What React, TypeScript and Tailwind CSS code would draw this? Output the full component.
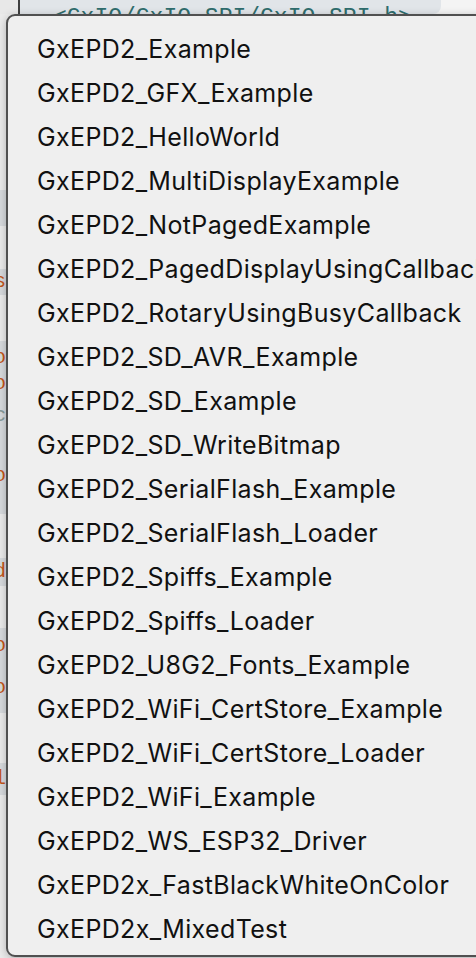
import React from 'react'

const items = [
  'GxEPD2_Example',
  'GxEPD2_GFX_Example',
  'GxEPD2_HelloWorld',
  'GxEPD2_MultiDisplayExample',
  'GxEPD2_NotPagedExample',
  'GxEPD2_PagedDisplayUsingCallback',
  'GxEPD2_RotaryUsingBusyCallback',
  'GxEPD2_SD_AVR_Example',
  'GxEPD2_SD_Example',
  'GxEPD2_SD_WriteBitmap',
  'GxEPD2_SerialFlash_Example',
  'GxEPD2_SerialFlash_Loader',
  'GxEPD2_Spiffs_Example',
  'GxEPD2_Spiffs_Loader',
  'GxEPD2_U8G2_Fonts_Example',
  'GxEPD2_WiFi_CertStore_Example',
  'GxEPD2_WiFi_CertStore_Loader',
  'GxEPD2_WiFi_Example',
  'GxEPD2_WS_ESP32_Driver',
  'GxEPD2x_FastBlackWhiteOnColor',
  'GxEPD2x_MixedTest',
]

// strips of the editor peeking out at the left edge: [height, band?, glyph]
const editorRows: [number, boolean, string][] = [
  [176, false, ''],
  [36, true, ''],
  [43, false, ''],
  [26, true, 's'],
  [46, false, ''],
  [33, true, 'o'],
  [20, true, 'o'],
  [44, true, 'c'],
  [76, true, 'o'],
  [44, false, ''],
  [28, true, 'd'],
  [42, false, ''],
  [35, true, 'o'],
  [50, true, 'o'],
  [50, false, ''],
  [32, true, 'l'],
  [123, false, ''],
  [54, false, ''],
]

export default function App() {
  return (
    <div className="relative w-[476px] h-[958px] overflow-hidden bg-[#ececec]">
      {/* editor behind the menu */}
      <div className="flex flex-col">
        <div className="flex h-[14px] shrink-0 bg-[#f4f4f4]">
          <div className="w-[18px] bg-[#e8e8e8]" />
          <div className="w-[2px] bg-[#3f3f3f]" />
          <div className="w-[421px] rounded-br-[8px] bg-[#e1e5e9] pl-[33px] overflow-hidden">
            <span className="block mt-[7px] text-[23px] leading-[23px] text-[#2f6d6d] font-['Liberation_Mono',monospace] whitespace-nowrap">
              &lt;GxIO/GxIO_SPI/GxIO_SPI.h&gt;
            </span>
          </div>
        </div>
        <div className="flex flex-col w-[6px]">
          {editorRows.map(([h, band, g], i) => (
            <div
              key={i}
              style={{ height: h }}
              className={`flex items-center overflow-hidden ${band ? 'bg-[#d7dadd]' : 'bg-[#ebebeb]'}`}
            >
              {g && (
                <span className={`-ml-[6px] text-[20px] font-['Liberation_Mono',monospace] ${g === 'c' ? 'text-[#8a9a9a]' : 'text-[#c4561a]'}`}>
                  {g}
                </span>
              )}
            </div>
          ))}
        </div>
      </div>

      {/* menu */}
      <div className="absolute left-[6px] top-[14px] -right-[20px] h-[943px] rounded-[9px] border-2 border-[#505050] bg-[#efefef] shadow-[0_2px_8px_rgba(0,0,0,0.25)] pt-[12px] font-['Inter','Noto_Sans',sans-serif] text-[#111]">
        {items.map((name) => (
          <div key={name} className="h-[44px] flex items-center pl-[29px] text-[25px] whitespace-nowrap tracking-[0.35px]">
            {name}
          </div>
        ))}
      </div>
    </div>
  )
}
